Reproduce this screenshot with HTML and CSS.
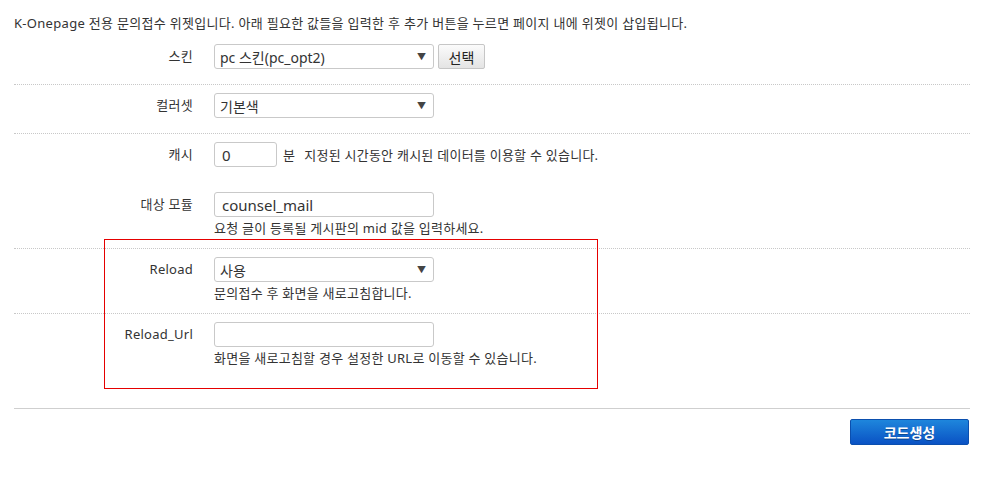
FILE: index.html
```html
<!DOCTYPE html>
<html lang="ko">
<head>
<meta charset="utf-8">
<title>K-Onepage 문의접수 위젯</title>
<link rel="stylesheet" href="styles.css">
</head>
<body>
<div class="page">
  <p class="intro">K-Onepage 전용 문의접수 위젯입니다. 아래 필요한 값들을 입력한 후 추가 버튼을 누르면 페이지 내에 위젯이 삽입됩니다.</p>
  <div class="form">
    <div class="row row-first dotted">
      <div class="label">스킨</div>
      <div class="field">
        <div class="inline">
          <div class="select"><span class="select-text">pc 스킨(pc_opt2)</span><span class="arrow">▼</span></div>
          <button class="btn-small" type="button">선택</button>
        </div>
      </div>
    </div>
    <div class="row row-second dotted">
      <div class="label">컬러셋</div>
      <div class="field">
        <div class="select"><span class="select-text">기본색</span><span class="arrow">▼</span></div>
      </div>
    </div>
    <div class="row row-gap">
      <div class="label">캐시</div>
      <div class="field">
        <div class="inline">
          <div class="input input-short">0</div>
          <span class="unit">분</span>
          <span class="inline-desc">지정된 시간동안 캐시된 데이터를 이용할 수 있습니다.</span>
        </div>
      </div>
    </div>
    <div class="row dotted">
      <div class="label">대상 모듈</div>
      <div class="field">
        <div class="input">counsel_mail</div>
        <p class="desc">요청 글이 등록될 게시판의 mid 값을 입력하세요.</p>
      </div>
    </div>
    <div class="row dotted">
      <div class="label">Reload</div>
      <div class="field">
        <div class="select"><span class="select-text">사용</span><span class="arrow">▼</span></div>
        <p class="desc">문의접수 후 화면을 새로고침합니다.</p>
      </div>
    </div>
    <div class="row row-last">
      <div class="label">Reload_Url</div>
      <div class="field">
        <div class="input"></div>
        <p class="desc">화면을 새로고침할 경우 설정한 URL로 이동할 수 있습니다.</p>
      </div>
    </div>
    <div class="highlight"></div>
  </div>
  <div class="actions">
    <button class="btn-primary" type="button">코드생성</button>
  </div>
</div>
</body>
</html>
```

FILE: styles.css
```css
html, body {
  margin: 0;
  padding: 0;
  background: #fff;
}
body {
  font-family: "Noto Sans", "Noto Sans CJK KR", sans-serif;
  font-size: 13px;
  letter-spacing: 0.25px;
  color: #333;
}
.page {
  margin: 0 16px 0 14px;
}
.intro {
  margin: 0;
  padding-top: 14px;
  height: 18px;
  line-height: 18px;
  overflow: hidden;
  white-space: nowrap;
  letter-spacing: 0.3px;
}
.form {
  position: relative;
}
.row {
  display: flex;
  align-items: flex-start;
  padding: 8px 0 11px;
}
.row.dotted {
  border-bottom: 1px dotted #c8c8c8;
}
.row-first {
  padding-top: 12px;
  padding-bottom: 15px;
}
.row-second {
  padding-bottom: 15px;
}
.row-gap {
  padding-bottom: 17px;
}
.row-last {
  padding-bottom: 41px;
}
.label {
  width: 179px;
  flex: none;
  text-align: right;
  line-height: 25px;
  height: 25px;
}
.field {
  margin-left: 21px;
}
.inline {
  display: flex;
  align-items: center;
  height: 25px;
}
.select, .input {
  box-sizing: border-box;
  width: 220px;
  height: 25px;
  border: 1px solid #c9c9c9;
  border-radius: 3px;
  background: #fff;
  display: flex;
  align-items: center;
  padding: 0 5px;
  font-size: 14px;
  letter-spacing: 0;
  color: #333;
}
.select {
  justify-content: space-between;
}
.arrow {
  font-size: 9px;
  color: #444;
  padding-right: 2px;
}
.input {
  font-size: 15px;
  padding-left: 7px;
}
.input-short {
  width: 63px;
}
.unit {
  margin-left: 6px;
}
.inline-desc {
  margin-left: 9px;
}
.btn-small {
  box-sizing: border-box;
  margin-left: 4px;
  height: 25px;
  width: 47px;
  border: 1px solid #c6c6c6;
  border-radius: 2px;
  background: linear-gradient(#fbfbfb, #e4e4e4);
  font-family: inherit;
  font-size: 14px;
  color: #222;
  padding: 0;
}
.desc {
  margin: 2px 0 0;
  height: 18px;
  line-height: 18px;
  overflow: hidden;
  white-space: nowrap;
}
.highlight {
  position: absolute;
  left: 90px;
  top: 207px;
  width: 494px;
  height: 150px;
  box-sizing: border-box;
  border: 1px solid #e50000;
}
.actions {
  border-top: 1px solid #cfcfcf;
  display: flex;
  justify-content: flex-end;
  padding-top: 10px;
}
.btn-primary {
  margin-right: 1px;
  width: 119px;
  height: 26px;
  border: 1px solid #0b4fae;
  border-radius: 2px;
  background: linear-gradient(#1e86dc, #0a52c4);
  color: #fff;
  font-family: inherit;
  font-size: 14px;
  font-weight: bold;
  text-shadow: 0 1px 0 rgba(0,0,0,0.3);
  padding: 0;
}
```
